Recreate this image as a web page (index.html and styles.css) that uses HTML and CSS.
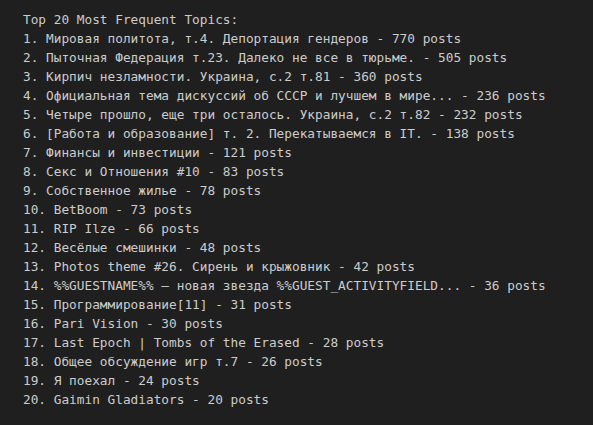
FILE: index.html
```html
<!DOCTYPE html>
<html lang="ru">
<head>
<meta charset="utf-8">
<link rel="stylesheet" href="styles.css">
</head>
<body>
<pre class="output">Top 20 Most Frequent Topics:
1. Мировая политота, т.4. Депортация гендеров - 770 posts
2. Пыточная Федерация т.23. Далеко не все в тюрьме. - 505 posts
3. Кирпич незламности. Украина, с.2 т.81 - 360 posts
4. Официальная тема дискуссий об СССР и лучшем в мире... - 236 posts
5. Четыре прошло, еще три осталось. Украина, с.2 т.82 - 232 posts
6. [Работа и образование] т. 2. Перекатываемся в IT. - 138 posts
7. Финансы и инвестиции - 121 posts
8. Секс и Отношения #10 - 83 posts
9. Собственное жилье - 78 posts
10. BetBoom - 73 posts
11. RIP Ilze - 66 posts
12. Весёлые смешинки - 48 posts
13. Photos theme #26. Сирень и крыжовник - 42 posts
14. %%GUESTNAME%% — новая звезда %%GUEST_ACTIVITYFIELD... - 36 posts
15. Программирование[11] - 31 posts
16. Pari Vision - 30 posts
17. Last Epoch | Tombs of the Erased - 28 posts
18. Общее обсуждение игр т.7 - 26 posts
19. Я поехал - 24 posts
20. Gaimin Gladiators - 20 posts</pre>
</body>
</html>
```
FILE: styles.css
```css
html, body {
  margin: 0;
  padding: 0;
  background: #1f1f1f;
  width: 593px;
  height: 425px;
  overflow: hidden;
}
.output {
  margin: 0;
  padding: 10px 0 0 23px;
  font-family: "DejaVu Sans Mono", "Liberation Mono", monospace;
  font-size: 12.77px;
  line-height: 19px;
  color: #cccccc;
  white-space: pre;
}
```
